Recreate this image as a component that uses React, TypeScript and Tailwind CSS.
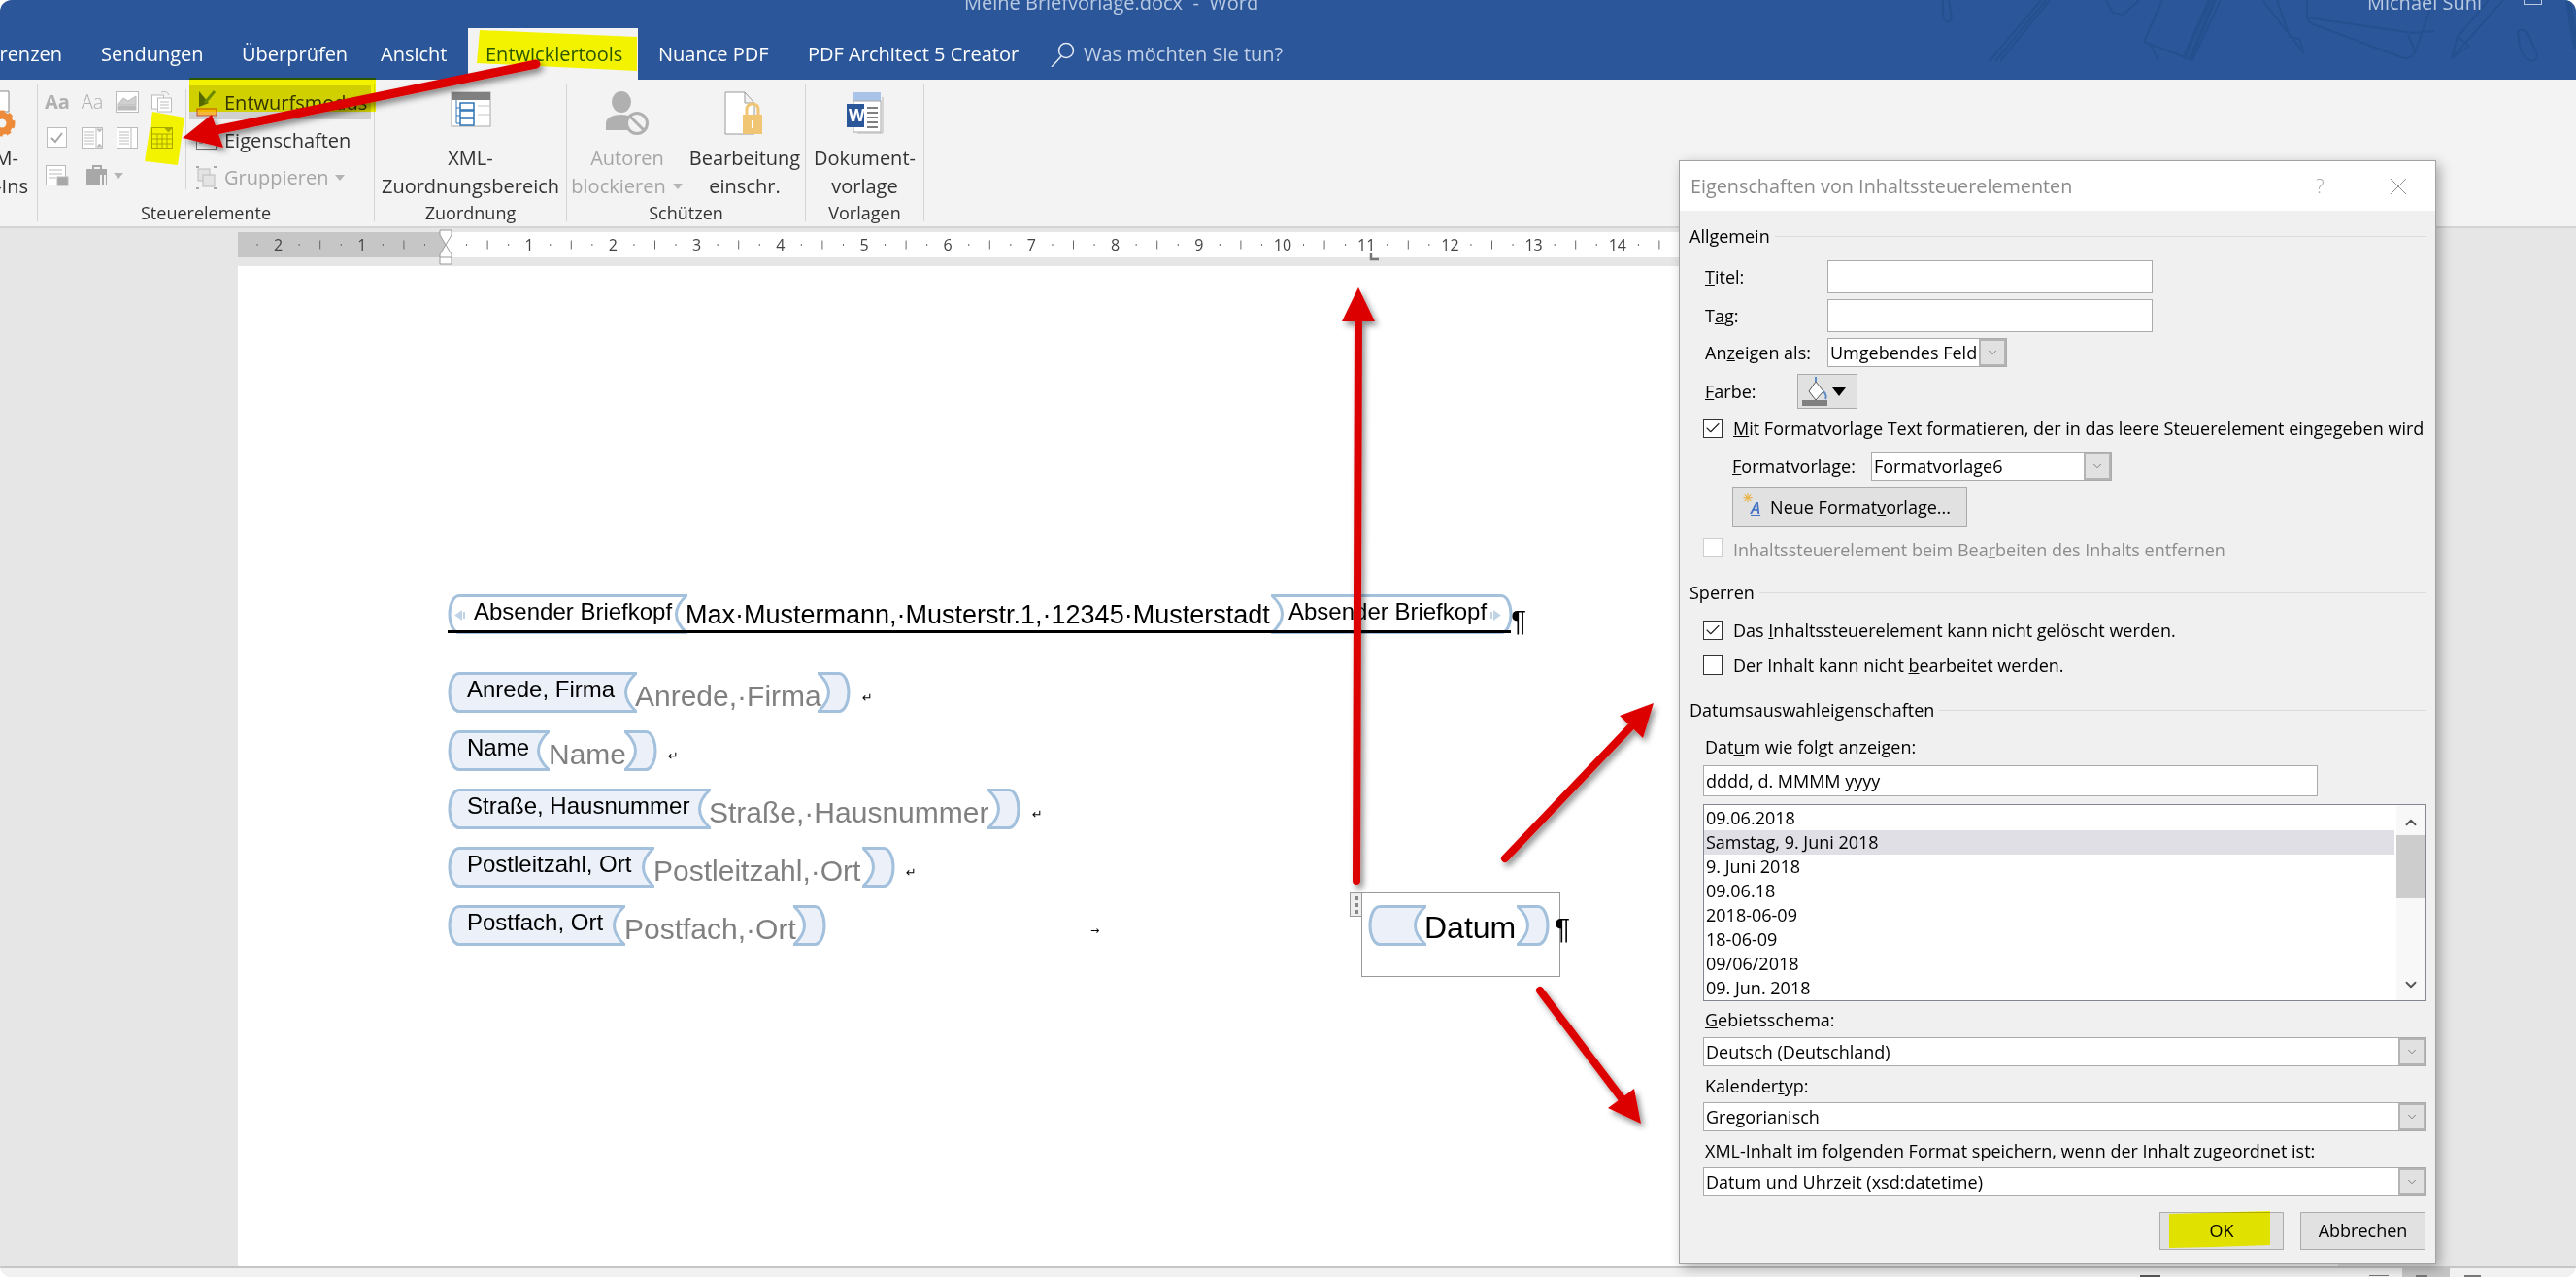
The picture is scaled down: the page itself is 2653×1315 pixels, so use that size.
import { ReactNode } from "react";
import { Check, ChevronDown, ChevronUp } from "lucide-react";

const Doodles = () => (
  <svg width="680" height="70" className="absolute right-0 top-0" fill="none" stroke="#24508f" strokeWidth="2">
    {/* offset: x - 1973 */}
    <path d="M28 0 V17 Q30 24 35 22 Q38 20 36 12 L34 0" />
    <path d="M76 63 L129 0 M82 63 L134 0 M87 63 L138 0" />
    <path d="M196 0 L203 13 L214 15 L230 0" />
    <path d="M235 43 L285 62 L314 0 M235 43 L254 0 M241 45 L250 62" />
    <path d="M276 60 L303 0 M282 62 L308 0" strokeWidth="4" />
    <path d="M357 0 L400 55 L395 40 L385 38 L372 0" />
    <path d="M403 0 V18 Q404 24 412 26 L503 60 Q512 60 515 52 L533 0 M403 18 L512 34 L534 32 M507 36 L514 52" />
    <path d="M605 0 L552 60 L558 38 L590 0 M552 60 L570 47 L558 38" />
    <path d="M620 32 Q628 28 632 38 L640 56 Q640 64 632 62 Q626 60 622 48 Z" />
    <path d="M672 0 L680 50" strokeWidth="6" />
  </svg>
);

const TitleRow = () => (
  <div className="relative flex h-[29px] text-[20px] leading-[6px] text-[#b9c9e1]">
    <Doodles />
    <span className="ml-[993px] whitespace-pre">Meine Briefvorlage.docx  -  Word</span>
    <span className="absolute left-[2438px] top-0">Michael Suhl</span>
    <span className="absolute left-[2599px] top-0 h-[5px] w-[19px] border border-t-0 border-[#b9c9e1]" />
  </div>
);

const TabRow = () => (
  <div className="flex h-[53px] items-stretch text-[20px] text-white">
    <div className="flex w-[64px] shrink-0 items-center justify-end overflow-hidden">
      <span>Referenzen</span>
    </div>
    <div className="ml-[40px] flex w-[145px] shrink-0 items-center">Sendungen</div>
    <div className="flex w-[143px] shrink-0 items-center">Überprüfen</div>
    <div className="flex w-[90px] shrink-0 items-center">Ansicht</div>
    <div className="flex w-[175px] shrink-0 items-center bg-[#f3f3f3] pl-[18px] text-[#2b579a]">Entwicklertools</div>
    <div className="ml-[21px] flex w-[154px] shrink-0 items-center">Nuance PDF</div>
    <div className="flex w-[250px] shrink-0 items-center">PDF Architect 5 Creator</div>
    <div className="flex items-center gap-[8px] text-[#c3d1e6]">
      <svg width="26" height="26" viewBox="0 0 26 26" fill="none" stroke="#e4eaf4" strokeWidth="1.5">
        <circle cx="16" cy="9" r="7.5" />
        <path d="M11 15 L1 26" />
      </svg>
      <span>Was möchten Sie tun?</span>
    </div>
  </div>
);

const Group = ({ w, label, children }: { w: string; label: string; children: ReactNode }) => (
  <div className={`mt-[4px] flex h-[142px] shrink-0 flex-col border-r border-[#d4d4d4] ${w}`}>
    <div className="flex h-[125px]">{children}</div>
    <div className="h-[20px] pt-[1px] text-center text-[18px] leading-[20px] text-[#333]">{label}</div>
  </div>
);

const Caret = () => (
  <svg width="12" height="8" className="ml-[6px] inline-block" fill="#b4b4b4">
    <path d="M1 1 H11 L6 7 Z" />
  </svg>
);

const LargeBtn = ({ w, icon, l1, l2, grey }: { w: string; icon: ReactNode; l1: string; l2: ReactNode; grey?: boolean }) => (
  <div className={`flex shrink-0 flex-col items-center whitespace-nowrap text-[20px] leading-[29px] ${w} ${grey ? "text-[#a6a6a6]" : "text-[#333]"}`}>
    <div className="flex h-[62px] items-start pt-[8px]">{icon}</div>
    <span>{l1}</span>
    <span>{l2}</span>
  </div>
);

const XmlIcon = () => (
  <svg width="42" height="38" fill="none">
    <rect x="1" y="1" width="40" height="35" fill="#fff" stroke="#a8a8a8" />
    <rect x="1" y="1" width="40" height="8" fill="#808080" />
    <path d="M6 9 V33 H10 M6 17 H10 M6 25 H10" stroke="#2e75b6" />
    <rect x="10" y="12" width="14" height="7" stroke="#2e75b6" strokeWidth="1.5" />
    <rect x="10" y="20" width="14" height="7" stroke="#2e75b6" strokeWidth="1.5" />
    <rect x="10" y="28" width="14" height="7" stroke="#2e75b6" strokeWidth="1.5" />
    <path d="M28 15 H41 M28 24 H41" stroke="#c8c8c8" />
  </svg>
);

const AuthorIcon = () => (
  <svg width="46" height="46" fill="#b0b0b0">
    <ellipse cx="17" cy="11" rx="10" ry="11" />
    <path d="M1 40 V32 Q3 24 17 24 Q28 24 30 30 L24 40 Z" />
    <circle cx="33" cy="33" r="10.5" fill="#f3f3f3" stroke="#b0b0b0" strokeWidth="3" />
    <path d="M26 26 L40 40" stroke="#b0b0b0" strokeWidth="3" />
  </svg>
);

const LockDocIcon = () => (
  <svg width="42" height="46" fill="none">
    <path d="M1 1 H21 L31 12 V44 H1 Z M21 1 V12 H31" fill="#fff" stroke="#9a9a9a" />
    <rect x="19" y="24" width="20" height="20" fill="#f0c674" />
    <path d="M23 24 V19 Q23 13 29 13 Q35 13 35 19 V24" stroke="#f0c674" strokeWidth="3" />
    <rect x="28" y="30" width="2" height="8" fill="#fff" />
  </svg>
);

const WordDocIcon = () => (
  <svg width="40" height="44" fill="none">
    <rect x="8" y="1" width="28" height="9" fill="#a9c4e8" />
    <rect x="8" y="10" width="28" height="32" fill="#fff" stroke="#a8a8a8" />
    <path d="M38 6 V43 H12" stroke="#b8b8b8" />
    <path d="M22 17 H33 M22 22 H33 M22 27 H33 M22 32 H33 M22 37 H33" stroke="#808080" strokeWidth="2" />
    <rect x="1" y="13" width="18" height="24" fill="#2b579a" />
    <text x="3" y="31" fontSize="17" fontWeight="700" fill="#fff" fontFamily="'Open Sans',sans-serif">W</text>
  </svg>
);

const smallGrey = "#bcbcbc";

const SmallIcons = () => (
  <div className="ml-[2px] flex w-[144px] shrink-0 flex-col pt-[1px]">
    <div className="flex h-[36px] items-center text-[#b0b0b0]">
      <div className="flex w-[36px] justify-center text-[20px] font-bold">Aa</div>
      <div className="flex w-[36px] justify-center text-[20px] font-light">Aa</div>
      <div className="flex w-[36px] justify-center">
        <svg width="24" height="22" fill="none" stroke={smallGrey}>
          <rect x=".5" y=".5" width="23" height="21" fill="#fff" />
          <path d="M3 13 L8 7 L13 10 L21 5 V14 H3 Z" fill="#d0d0d0" />
          <rect x="3" y="15" width="18" height="4" fill={smallGrey} />
        </svg>
      </div>
      <div className="flex w-[36px] justify-center">
        <svg width="22" height="24" fill="none" stroke={smallGrey}>
          <rect x=".5" y="5" width="12" height="14" fill="#fff" />
          <rect x="6.5" y="8" width="14" height="14" fill="#fff" />
          <path d="M9 12 H18 M9 15 H18 M9 18 H18 M10 2 Q16 0 18 5" />
        </svg>
      </div>
    </div>
    <div className="mt-[1px] flex h-[36px] items-center">
      <div className="flex w-[36px] justify-center">
        <svg width="22" height="22" fill="#fff" stroke={smallGrey}>
          <rect x=".5" y=".5" width="20" height="20" />
          <path d="M5 11 L9 15 L16 6" fill="none" stroke="#a8a8a8" strokeWidth="2" />
        </svg>
      </div>
      <div className="flex w-[36px] justify-center">
        <svg width="22" height="22" fill="#fff" stroke={smallGrey}>
          <rect x=".5" y=".5" width="21" height="21" />
          <path d="M3 5 H13 M3 8 H13 M3 11 H13 M3 14 H13 M3 17 H13 M15 1 V21" fill="none" />
          <path d="M16 2 H21 L18.500 5 Z M16 20 H21 L18.500 17 Z" fill={smallGrey} />
        </svg>
      </div>
      <div className="flex w-[36px] justify-center">
        <svg width="22" height="22" fill="#fff" stroke={smallGrey}>
          <rect x=".5" y=".5" width="21" height="21" />
          <path d="M3 5 H13 M3 8 H13 M3 11 H13 M3 14 H13 M3 17 H13 M15 1 V21" fill="none" />
        </svg>
      </div>
      <div className="flex w-[36px] justify-center">
        <svg width="22" height="22" fill="none" stroke="#a8a800">
          <rect x=".5" y=".5" width="21" height="21" />
          <path d="M1 7 H21 M1 12 H21 M1 17 H21 M6 7 V21 M11 7 V21 M16 7 V21" />
          <path d="M14 1 H21 L17.500 5 Z" fill="#a8a800" />
        </svg>
      </div>
    </div>
    <div className="mt-[3px] flex h-[36px] items-center">
      <div className="flex w-[36px] justify-center">
        <svg width="24" height="22" fill="#fff" stroke={smallGrey}>
          <rect x=".5" y=".5" width="20" height="20" />
          <path d="M3 5 H17 M3 9 H17 M3 13 H11" fill="none" />
          <rect x="12" y="12" width="11" height="9" fill="#a8a8a8" />
        </svg>
      </div>
      <div className="flex w-[50px] items-center justify-center pl-[12px]">
        <svg width="24" height="22" fill="#a8a8a8">
          <rect x="0" y="4" width="22" height="17" rx="1" />
          <path d="M7 4 V1 H15 V4" fill="none" stroke="#a8a8a8" strokeWidth="2" />
          <path d="M15 10 V21 M19 10 V21" stroke="#f3f3f3" strokeWidth="2" />
        </svg>
        <Caret />
      </div>
    </div>
  </div>
);

const ButtonsColumn = () => (
  <div className="flex">
    <div className="ml-[6px] mt-[6px] h-[103px] w-px bg-[#d4d4d4]" />
    <div className="ml-[3px] flex flex-col text-[20px] text-[#333]">
      <div className="mt-[2px] flex h-[35px] w-[187px] items-center gap-[8px] whitespace-nowrap bg-[#d0d0d0] pl-[7px]">
        <svg width="21" height="28" fill="none" className="shrink-0">
          <path d="M3 2 L13 14 L3 18 Z" fill="#55691a" />
          <path d="M9 14 L19 2" stroke="#6c8a25" strokeWidth="3" />
          <rect x="1" y="20" width="20" height="7" fill="#f5b83d" stroke="#c0504d" />
        </svg>
        <span>Entwurfsmodus</span>
      </div>
      <div className="mt-[4px] flex h-[35px] items-center gap-[8px] pl-[7px]">
        <svg width="21" height="20" fill="#fff" stroke="#777">
          <rect x=".5" y=".5" width="20" height="18" />
          <path d="M3 12 H7 M10 12 H18" />
        </svg>
        <span>Eigenschaften</span>
      </div>
      <div className="mt-[3px] flex h-[35px] items-center gap-[8px] pl-[7px] text-[#a6a6a6]">
        <svg width="21" height="24" fill="none" stroke={smallGrey}>
          <rect x="2" y="3" width="12" height="12" fill="#e4e4e4" />
          <rect x="7" y="9" width="12" height="12" fill="#e4e4e4" />
          <path d="M0 1 H3 M18 1 H21 M0 23 H3 M18 23 H21" strokeWidth="2" stroke="#a8a8a8" />
        </svg>
        <span className="flex items-center">
          Gruppieren
          <Caret />
        </span>
      </div>
    </div>
  </div>
);

const Ribbon = () => (
  <div className="flex h-[151px] bg-[#f3f3f3]">
    <Group w="w-[39px]" label="">
      <div className="flex w-[38px] flex-col items-end whitespace-nowrap pr-[9px] text-[20px] leading-[29px] text-[#333]">
        <div className="h-[62px] w-full">
          <svg width="20" height="58" fill="none">
            <path d="M0 8 H9 V29 H0" fill="#fff" stroke="#888" />
            <circle cx="2" cy="41" r="8" stroke="#ed8b3a" strokeWidth="7" />
            <circle cx="2" cy="41" r="12" stroke="#ed8b3a" strokeWidth="3" strokeDasharray="5 4" />
          </svg>
        </div>
        <span className="mr-[10px]">COM-</span>
        <span>Add-Ins</span>
      </div>
    </Group>
    <Group w="w-[347px]" label="Steuerelemente">
      <SmallIcons />
      <ButtonsColumn />
    </Group>
    <Group w="w-[198px]" label="Zuordnung">
      <LargeBtn w="w-[197px]" icon={<XmlIcon />} l1="XML-" l2="Zuordnungsbereich" />
    </Group>
    <Group w="w-[246px]" label="Schützen">
      <LargeBtn
        w="w-[124px]"
        grey
        icon={<AuthorIcon />}
        l1="Autoren"
        l2={
          <span className="flex items-center">
            blockieren
            <Caret />
          </span>
        }
      />
      <LargeBtn w="w-[118px]" icon={<LockDocIcon />} l1="Bearbeitung" l2="einschr." />
    </Group>
    <Group w="w-[122px]" label="Vorlagen">
      <LargeBtn w="w-[121px]" icon={<WordDocIcon />} l1="Dokument-" l2="vorlage" />
    </Group>
  </div>
);

const CM = 86.2;
const ZERO = 214;

const Ruler = () => {
  const marks = Array.from({ length: 18 }, (_, i) => i - 3);
  return (
    <div className="flex h-[41px] border-t-2 border-[#d4d4d4] bg-[#e6e6e6] pl-[245px] pt-[4px]">
      <svg width="1490" height="36" className="overflow-visible">
        <rect x="0" y="0" width={ZERO} height="26" fill="#c6c6c6" />
        <rect x={ZERO} y="0" width="1280" height="26" fill="#fff" />
        {marks.map((n) => {
          const x = ZERO + n * CM;
          return (
            <g key={n} stroke="#666" fill="#444">
              {n !== 0 && n > -3 && (
                <text x={x} y="19" fontSize="16" textAnchor="middle" stroke="none" fontFamily="'Open Sans',sans-serif">
                  {Math.abs(n)}
                </text>
              )}
              {x + CM * 0.25 > 0 && <path d={`M${x + CM * 0.25} 12 v2`} />}
              {x + CM * 0.5 > 0 && <path d={`M${x + CM * 0.5} 8.500 v9`} />}
              {x + CM * 0.75 > 0 && <path d={`M${x + CM * 0.75} 12 v2`} />}
            </g>
          );
        })}
        <path d={`M${ZERO - 6} -2 h12 v5 l-6 10 l-6 -10 Z`} fill="#fff" stroke="#999" />
        <path d={`M${ZERO} 13 l6 10 v10 h-12 v-10 Z M${ZERO - 6} 26 h12`} fill="#fff" stroke="#999" />
        <path d="M1167 22 v6 h8" fill="none" stroke="#777" strokeWidth="2.500" />
      </svg>
    </div>
  );
};

const TagLeft = ({ w, text, white, icon }: { w: number; text?: string; white?: boolean; icon?: boolean }) => {
  const h = white ? 41 : 42;
  const mid = h / 2;
  return (
    <div className="relative shrink-0 leading-none">
      <svg width={w} height={h} className="block">
        <path
          d={`M${w - 1} 1.500 H12 C6 1.500 2 ${mid - 10} 2 ${mid} C2 ${mid + 10} 6 ${h - 1.5} 12 ${h - 1.5} H${w - 1} Q${w - 22} ${mid} ${w - 1} 1.500 Z`}
          fill={white ? "#fff" : "#ecf1f9"}
          stroke="#a3c0dc"
          strokeWidth="3"
        />
        {icon && <path d="M14 18 v7 l-5 -3.500 Z M17 18 v7" fill="#c0d3e6" stroke="#c0d3e6" strokeWidth="2" />}
      </svg>
      {text && (
        <span className={`absolute top-[3px] whitespace-nowrap text-[24px] leading-[30px] text-black ${white ? "left-[27px]" : "left-[20px]"}`}>
          {text}
        </span>
      )}
    </div>
  );
};

const TagRight = ({ white, icon }: { white?: boolean; icon?: boolean }) => {
  const h = white ? 41 : 42;
  const w = white ? 249 : 34;
  const mid = h / 2;
  return (
    <svg width={w} height={h} className="block shrink-0">
      <path
        d={`M1 1.500 H${w - 12} C${w - 6} 1.500 ${w - 2} ${mid - 10} ${w - 2} ${mid} C${w - 2} ${mid + 10} ${w - 6} ${h - 1.5} ${w - 12} ${h - 1.5} H1 Q22 ${mid} 1 1.500 Z`}
        fill={white ? "#fff" : "#ecf1f9"}
        stroke="#a3c0dc"
        strokeWidth="3"
      />
      {icon && <path d={`M${w - 22} 18 v7 M${w - 19} 18 v7 l5 -3.500 Z`} fill="#c0d3e6" stroke="#c0d3e6" strokeWidth="2" />}
    </svg>
  );
};

const Pilcrow = () => <span className="text-[30px] leading-none text-black">¶</span>;

const Mark = ({ className }: { className: string }) => (
  <span className={`pt-[10px] font-['DejaVu_Sans',sans-serif] text-[13px] leading-none text-black ${className}`}>↵</span>
);

const FieldRow = ({ label, tagW, phW, ph, mark }: { label: string; tagW: number; phW: string; ph: string; mark: ReactNode }) => (
  <div className="mb-[18px] flex h-[42px] items-center font-['Liberation_Sans',sans-serif]">
    <TagLeft w={tagW} text={label} />
    <div className={`shrink-0 whitespace-nowrap pt-[8px] text-[30px] leading-[34px] text-[#808080] ${phW}`}>{ph}</div>
    <TagRight />
    {mark}
  </div>
);

const DatumFrame = () => (
  <div className="absolute left-[1157px] top-[645px] h-[87px] w-[205px] border border-[#999] font-['Liberation_Sans',sans-serif]">
    <div className="absolute -left-[13px] -top-px flex h-[25px] w-[13px] flex-col items-center justify-around border border-[#999] bg-[#eee] py-[1px]">
      <i className="h-[4px] w-[4px] bg-[#888]" />
      <i className="h-[4px] w-[4px] bg-[#888]" />
      <i className="h-[4px] w-[4px] bg-[#888]" />
    </div>
    <div className="ml-[6px] mt-[12px] flex h-[42px] items-center">
      <TagLeft w={60} />
      <span className="-ml-[2px] w-[95px] shrink-0 pt-[4px] text-[32px] leading-[36px] text-black">Datum</span>
      <TagRight />
      <span className="ml-[5px] pt-[8px]">
        <Pilcrow />
      </span>
    </div>
  </div>
);

const Paper = () => (
  <div className="relative ml-[245px] h-[1030px] w-[2163px] bg-white pl-[216px] pt-[338px]">
    <div className="relative flex h-[41px] items-start font-['Liberation_Sans',sans-serif]">
      <TagLeft w={247} text="Absender Briefkopf" white icon />
      <span className="-ml-[2px] w-[603px] shrink-0 whitespace-nowrap pt-[4px] text-[27px] leading-[34px] text-black">
        Max·Mustermann,·Musterstr.1,·12345·Musterstadt
      </span>
      <div className="relative shrink-0">
        <TagRight white icon />
        <span className="absolute left-[18px] top-[3px] whitespace-nowrap text-[24px] leading-[30px] text-black">Absender Briefkopf</span>
      </div>
      <span className="-ml-[2px] pt-[12px]">
        <Pilcrow />
      </span>
      <div className="absolute left-0 top-[37px] h-[3px] w-[1095px] bg-black" />
    </div>
    <div className="mt-[39px]">
      <FieldRow label="Anrede, Firma" tagW={195} phW="w-[188px] -ml-[2px]" ph="Anrede,·Firma" mark={<Mark className="ml-[12px]" />} />
      <FieldRow label="Name" tagW={105} phW="w-[78px] -ml-[1px]" ph="Name" mark={<Mark className="ml-[11px]" />} />
      <FieldRow label="Straße, Hausnummer" tagW={271} phW="w-[287px] -ml-[2px]" ph="Straße,·Hausnummer" mark={<Mark className="ml-[12px]" />} />
      <FieldRow label="Postleitzahl, Ort" tagW={213} phW="w-[215px] -ml-[1px]" ph="Postleitzahl,·Ort" mark={<Mark className="ml-[11px]" />} />
      <FieldRow
        label="Postfach, Ort"
        tagW={183}
        phW="w-[174px] -ml-[1px]"
        ph="Postfach,·Ort"
        mark={<span className="ml-[272px] pt-[10px] font-['DejaVu_Sans',sans-serif] text-[11px] leading-none text-black">→</span>}
      />
    </div>
    <DatumFrame />
  </div>
);

const Cb = ({ checked, disabled }: { checked?: boolean; disabled?: boolean }) => (
  <span className={`flex h-[20px] w-[20px] shrink-0 items-center justify-center border bg-white ${disabled ? "border-[#cfcfcf]" : "border-[#333]"}`}>
    {checked && <Check size={18} strokeWidth={1.5} className="text-[#222]" />}
  </span>
);

const Heading = ({ text, className }: { text: string; className: string }) => (
  <div className={`flex h-[20px] items-center gap-[5px] ${className}`}>
    <span>{text}</span>
    <div className="h-px flex-1 bg-[#dcdcdc]" />
  </div>
);

const Select = ({ text, className }: { text: string; className: string }) => (
  <div className={`flex h-[30px] items-stretch border border-[#ababab] bg-white ${className}`}>
    <span className="flex-1 overflow-hidden whitespace-nowrap pl-[2px] leading-[28px]">{text}</span>
    <span className="flex w-[28px] shrink-0 items-center justify-center border-2 border-[#b4b4b4] bg-[#e1e1e1]">
      <ChevronDown size={14} strokeWidth={1.2} className="text-[#555]" />
    </span>
  </div>
);

const dates = ["09.06.2018", "Samstag, 9. Juni 2018", "9. Juni 2018", "09.06.18", "2018-06-09", "18-06-09", "09/06/2018", "09. Jun. 2018"];

const Dialog = () => (
  <div className="absolute left-[1729px] top-[165px] h-[1137px] w-[780px] border border-[#a3a3a3] bg-[#f0f0f0] text-[18px] text-black shadow-[4px_4px_12px_rgba(0,0,0,0.3)]">
    <div className="flex h-[51px] items-center bg-white pl-[11px] text-[19.800px] text-[#8a8a8a]">
      <span>Eigenschaften von Inhaltssteuerelementen</span>
      <span className="ml-[251px] font-light text-[#a8a8a8]">?</span>
      <svg width="16" height="16" className="ml-[68px]" stroke="#909090" fill="none">
        <path d="M0 0 L16 16 M16 0 L0 16" />
      </svg>
    </div>
    <div className="pl-[10px] pr-[9px]">
      <Heading text="Allgemein" className="mt-[16px]" />
      <div className="ml-[14px]">
        <div className="mt-[15px] flex h-[34px] items-center">
          <span className="w-[128px] pl-[2px]"><u>T</u>itel:</span>
          <div className="h-full w-[335px] border border-[#ababab] bg-white" />
        </div>
        <div className="mt-[6px] flex h-[34px] items-center">
          <span className="w-[128px] pl-[2px]">T<u>a</u>g:</span>
          <div className="h-full w-[335px] border border-[#ababab] bg-white" />
        </div>
        <div className="mt-[6px] flex h-[30px] items-center">
          <span className="w-[128px] pl-[2px]">An<u>z</u>eigen als:</span>
          <Select text="Umgebendes Feld" className="w-[185px]" />
        </div>
        <div className="mt-[7px] flex h-[36px] items-center">
          <span className="w-[97px] pl-[2px]"><u>F</u>arbe:</span>
          <div className="flex h-full w-[62px] items-center gap-[4px] border border-[#ababab] bg-[#e1e1e1] pl-[3px]">
            <svg width="28" height="32" fill="none">
              <path d="M15 6 L23 16 L15 25 L8 16 Z" fill="#fff" stroke="#555" />
              <path d="M15 6 V1 M23 16 Q27 20 25 24" stroke="#5b8cc8" strokeWidth="2" />
              <rect x="1" y="25" width="26" height="6" fill="#808080" />
            </svg>
            <svg width="14" height="9" fill="#000">
              <path d="M0 0 H14 L7 9 Z" />
            </svg>
          </div>
        </div>
        <div className="mt-[10px] flex h-[20px] items-center gap-[11px]">
          <Cb checked />
          <span className="whitespace-nowrap"><u>M</u>it Formatvorlage Text formatieren, der in das leere Steuerelement eingegeben wird</span>
        </div>
        <div className="ml-[30px] mt-[14px] flex h-[30px] items-center">
          <span className="w-[143px]"><u>F</u>ormatvorlage:</span>
          <Select text="Formatvorlage6" className="w-[248px]" />
        </div>
        <div className="ml-[30px] mt-[7px] flex h-[41px] w-[242px] items-center gap-[10px] border border-[#ababab] bg-[#e1e1e1] pl-[18px]">
          <span className="relative text-[17px] font-semibold italic text-[#4472c4] underline">
            A<span className="absolute -left-[8px] -top-[6px] text-[12px] not-italic text-[#e8b64c] no-underline">✳</span>
          </span>
          <span>Neue Format<u>v</u>orlage...</span>
        </div>
        <div className="mt-[11px] flex h-[20px] items-center gap-[11px] text-[#8c8c8c]">
          <Cb disabled />
          <span className="pt-[4px]">Inhaltssteuerelement beim Bea<u>r</u>beiten des Inhalts entfernen</span>
        </div>
      </div>
      <Heading text="Sperren" className="mt-[26px]" />
      <div className="ml-[14px]">
        <div className="mt-[19px] flex h-[20px] items-center gap-[11px]">
          <Cb checked />
          <span>Das <u>I</u>nhaltssteuerelement kann nicht gelöscht werden.</span>
        </div>
        <div className="mt-[16px] flex h-[20px] items-center gap-[11px]">
          <Cb />
          <span>Der Inhalt kann nicht <u>b</u>earbeitet werden.</span>
        </div>
      </div>
      <Heading text="Datumsauswahleigenschaften" className="mt-[26px]" />
      <div className="ml-[14px]">
        <div className="mt-[18px] h-[20px] pl-[2px] leading-[20px]">Dat<u>u</u>m wie folgt anzeigen:</div>
        <div className="mt-[9px] h-[32px] w-[633px] border border-[#ababab] bg-white pl-[2px] leading-[30px]">dddd, d. MMMM yyyy</div>
        <div className="mt-[8px] flex h-[203px] border border-[#828790] bg-white">
          <div className="flex-1 overflow-hidden pt-[1px]">
            {dates.map((d, i) => (
              <div key={d} className={`h-[25px] pl-[2px] leading-[25px] ${i === 1 ? "mr-[2px] bg-[#dfdfe5]" : ""}`}>{d}</div>
            ))}
          </div>
          <div className="flex w-[30px] flex-col items-center bg-[#f8f8f8]">
            <ChevronUp size={18} strokeWidth={2.5} className="mt-[9px] text-[#555]" />
            <div className="mt-[4px] h-[65px] w-full bg-[#cdcdcd]" />
            <ChevronDown size={18} strokeWidth={2.5} className="mt-[80px] text-[#555]" />
          </div>
        </div>
        <div className="mt-[9px] h-[20px] pl-[2px] leading-[20px]"><u>G</u>ebietsschema:</div>
        <Select text="Deutsch (Deutschland)" className="mt-[8px]" />
        <div className="mt-[10px] h-[20px] pl-[2px] leading-[20px]">Kalender<u>t</u>yp:</div>
        <Select text="Gregorianisch" className="mt-[7px]" />
        <div className="mt-[10px] h-[20px] pl-[2px] leading-[20px]"><u>X</u>ML-Inhalt im folgenden Format speichern, wenn der Inhalt zugeordnet ist:</div>
        <Select text="Datum und Uhrzeit (xsd:datetime)" className="mt-[7px]" />
        <div className="mt-[16px] flex h-[39px] justify-end gap-[17px] pr-[1px]">
          <button className="w-[128px] border border-[#adadad] bg-[#e1e1e1]">OK</button>
          <button className="w-[129px] border border-[#adadad] bg-[#e1e1e1]">Abbrechen</button>
        </div>
      </div>
    </div>
  </div>
);

const StatusBar = () => (
  <div className="relative h-[11px] border-t-2 border-[#c6c6c6] bg-[#f1f1f1]">
    <i className="absolute left-[2204px] top-[7px] h-[3px] w-[21px] bg-[#555]" />
    <i className="absolute left-[2440px] top-[7px] h-[3px] w-[20px] border-t border-[#777]" />
    <i className="absolute left-[2474px] top-0 h-[10px] w-[49px] bg-[#c6c6c6]" />
    <i className="absolute left-[2488px] top-[7px] h-[3px] w-[12px] bg-[#777]" />
    <i className="absolute left-[2538px] top-[7px] h-[3px] w-[17px] bg-[#777]" />
  </div>
);

const Highlights = () => (
  <svg width="2653" height="1315" className="pointer-events-none absolute left-0 top-0 mix-blend-multiply">
    <g fill="#ffff00">
      <path d="M494 31 L656 38 V73 L491 65 Z" />
      <rect x="195" y="80" width="192" height="35" />
      <path d="M157 115 L190 121 L183 170 L149 166 Z" />
      <path d="M2234 1250 L2338 1247 V1282 L2280 1284 L2234 1285 Z" />
    </g>
  </svg>
);

const Arrow = ({ d }: { d: string }) => <path d={d} />;

const Arrows = () => (
  <svg width="2653" height="1315" className="pointer-events-none absolute left-0 top-0">
    <defs>
      <filter id="arrowShadow" x="-20%" y="-20%" width="140%" height="140%">
        <feDropShadow dx="3" dy="4" stdDeviation="3" floodColor="#000" floodOpacity="0.45" />
      </filter>
    </defs>
    <g fill="#dc0000" stroke="none" filter="url(#arrowShadow)">
      <g stroke="#dc0000" strokeWidth="8" strokeLinecap="round">
        <path d="M552 66 L222 134" strokeWidth="9" />
        <path d="M1397 907 L1399 325" />
        <path d="M1550 884 L1680 748" />
        <path d="M1586 1020 L1670 1131" />
      </g>
      <Arrow d="M188 142 L218 118 L230 152 Z" />
      <Arrow d="M1399 296 L1382 331 L1416 331 Z" />
      <Arrow d="M1703 724 L1668 737 L1692 760 Z" />
      <Arrow d="M1690 1157 L1656 1141 L1683 1121 Z" />
    </g>
  </svg>
);

export default function App() {
  return (
    <div className="relative h-[1315px] w-[2653px] overflow-hidden bg-white font-['Open_Sans',sans-serif]">
      <div className="relative h-full overflow-hidden rounded-[12px] bg-[#e6e6e6]">
        <div className="h-[82px] bg-[#2b579a]">
          <TitleRow />
          <TabRow />
        </div>
        <Ribbon />
        <Ruler />
        <Paper />
        <StatusBar />
        <Dialog />
        <Highlights />
        <Arrows />
      </div>
    </div>
  );
}
